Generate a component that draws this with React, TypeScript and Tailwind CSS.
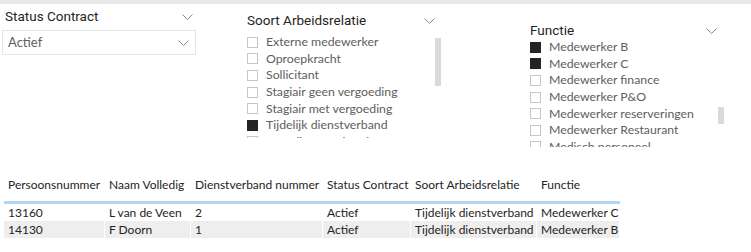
const soort = [
  { label: "Externe medewerker", on: false },
  { label: "Oproepkracht", on: false },
  { label: "Sollicitant", on: false },
  { label: "Stagiair geen vergoeding", on: false },
  { label: "Stagiair met vergoeding", on: false },
  { label: "Tijdelijk dienstverband", on: true },
  { label: "Vast dienstverband", on: false },
];

const functies = [
  { label: "Medewerker B", on: true },
  { label: "Medewerker C", on: true },
  { label: "Medewerker finance", on: false },
  { label: "Medewerker P&O", on: false },
  { label: "Medewerker reserveringen", on: false },
  { label: "Medewerker Restaurant", on: false },
  { label: "Medisch personeel", on: false },
];

const columns = [
  { title: "Persoonsnummer", w: "w-[101px]" },
  { title: "Naam Volledig", w: "w-[86px]" },
  { title: "Dienstverband nummer", w: "w-[132px]" },
  { title: "Status Contract", w: "w-[88px]" },
  { title: "Soort Arbeidsrelatie", w: "w-[126px]" },
  { title: "Functie", w: "w-[83px]" },
];

const rows = [
  ["13160", "L van de Veen", "2", "Actief", "Tijdelijk dienstverband", "Medewerker C"],
  ["14130", "F Doorn", "1", "Actief", "Tijdelijk dienstverband", "Medewerker B"],
];

function Chevron() {
  return (
    <svg width="11" height="6" viewBox="0 0 11 6" fill="none" className="shrink-0">
      <polyline points="0.5,0.5 5.5,5.5 10.5,0.5" stroke="#8a8886" strokeWidth="1" />
    </svg>
  );
}

function Item({ label, on }: { label: string; on: boolean }) {
  return (
    <div className="flex h-[16.6px] shrink-0 items-center gap-[8px]">
      <span
        className={
          on
            ? "h-[11px] w-[11px] shrink-0 bg-[#252423]"
            : "h-[11px] w-[11px] shrink-0 border border-[#c8c6c4] bg-white"
        }
      />
      <span className="whitespace-nowrap text-[12.3px] leading-none text-[#605e5c]">{label}</span>
    </div>
  );
}

function Title({ children }: { children: string }) {
  return <span className="font-['Roboto',sans-serif] text-[13.5px] leading-none text-[#252423]">{children}</span>;
}

export default function App() {
  return (
    <div className="h-[252px] w-[751px] overflow-hidden bg-white font-['Lato',sans-serif]">
      <div className="h-[4px] bg-[#e8e8e8]" />

      <div className="flex h-[148px] items-start">
        {/* Status Contract dropdown */}
        <div className="ml-[2px] w-[194px] pt-[5px]">
          <div className="flex h-[16px] items-center justify-between pl-[3px] pr-[3px]">
            <Title>Status Contract</Title>
            <Chevron />
          </div>
          <div className="mt-[5px] flex h-[25px] items-center justify-between border border-[#e6e6e6] pl-[5px] pr-[6px]">
            <span className="text-[13px] text-[#605e5c]">Actief</span>
            <Chevron />
          </div>
        </div>

        {/* Soort Arbeidsrelatie */}
        <div className="ml-[51px] w-[194px] pt-[9px]">
          <div className="flex h-[16px] items-center justify-between pr-[6px]">
            <Title>Soort Arbeidsrelatie</Title>
            <Chevron />
          </div>
          <div className="mt-[5px] flex">
            <div className="flex h-[104px] flex-1 flex-col overflow-hidden">
              {soort.map((s) => (
                <Item key={s.label} label={s.label} on={s.on} />
              ))}
            </div>
            <div className="mt-[4px] h-[48px] w-[6px] bg-[#dadada]" />
          </div>
        </div>

        {/* Functie */}
        <div className="ml-[89px] w-[194px] pt-[19px]">
          <div className="flex h-[16px] items-center justify-between pr-[7px]">
            <Title>Functie</Title>
            <Chevron />
          </div>
          <div className="flex">
            <div className="flex h-[108px] flex-1 flex-col overflow-hidden">
              {functies.map((s) => (
                <Item key={s.label} label={s.label} on={s.on} />
              ))}
            </div>
            <div className="mt-[68px] h-[17px] w-[6px] bg-[#dadada]" />
          </div>
        </div>
      </div>

      {/* Table */}
      <div className="ml-[4px] mt-[22px] w-[616px] text-[12px] text-[#252423]">
        <div className="flex h-[30px] items-end border-b-[3px] border-[#b3d5f2] pb-[7px]">
          {columns.map((c) => (
            <div key={c.title} className={`${c.w} shrink-0 whitespace-nowrap pl-[4px]`}>
              {c.title}
            </div>
          ))}
        </div>
        {rows.map((r, i) => (
          <div key={r[0]} className={i % 2 === 1 ? "flex h-[17px] items-center bg-[#eeeeee]" : "flex h-[17px] items-center"}>
            {r.map((cell, j) => (
              <div key={j} className={`${columns[j].w} shrink-0 whitespace-nowrap border-r border-white pl-[4px]`}>
                {cell}
              </div>
            ))}
          </div>
        ))}
      </div>
    </div>
  );
}
